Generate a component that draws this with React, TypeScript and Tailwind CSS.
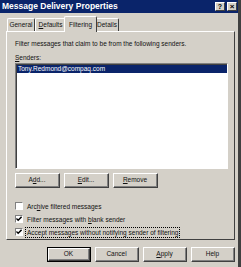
import type { ReactNode } from 'react';

const font = { fontFamily: '"Liberation Sans", Arial, sans-serif' };

function WinButton({ children, wide = 'w-[44px]', isDefault = false }: { children: ReactNode; wide?: string; isDefault?: boolean }) {
  return (
    <div className={`${wide} h-[15px] ${isDefault ? 'border border-black' : ''}`}>
      <div className="h-full w-full border-t border-l border-white border-r border-b border-r-[#404040] border-b-[#404040]">
        <div className="h-full w-full border-r border-b border-r-[#808080] border-b-[#808080] flex items-center justify-center text-[6.5px] text-[#111]">
          {children}
        </div>
      </div>
    </div>
  );
}

function Check({ checked, children, focused = false }: { checked: boolean; children: ReactNode; focused?: boolean }) {
  return (
    <div className="flex items-center gap-[3px] h-[10px]">
      <div className="w-[8px] h-[8px] bg-white border-t border-l border-t-[#808080] border-l-[#808080] border-r border-b border-r-white border-b-white flex items-center justify-center">
        {checked && (
          <svg width="6" height="6" viewBox="0 0 7 7">
            <path d="M0.5 3 L2.5 5 L6.5 1" stroke="black" strokeWidth="1.6" fill="none" />
          </svg>
        )}
      </div>
      <span className={`text-[6.5px] text-[#111] leading-[9px] px-[1px] ${focused ? 'outline outline-1 outline-dotted outline-black' : ''}`}>
        {children}
      </span>
    </div>
  );
}

function Tab({ label, active = false, w }: { label: ReactNode; active?: boolean; w: string }) {
  return (
    <div
      className={`${w} ${active ? 'h-[16px] -mb-[1px] bg-[#d4d0c8] z-10 -mx-[2px]' : 'h-[13px]'} border-t border-l border-white border-r border-r-[#404040] rounded-t-[2px] flex items-center justify-center text-[6.5px] text-[#111]`}
    >
      {label}
    </div>
  );
}

export default function App() {
  return (
    <div className="w-[241px] h-[267px] bg-[#d4d0c8] overflow-hidden flex flex-col border-r-[3px] border-r-[#404040]" style={font}>
      <div className="h-[13px] bg-[#0a246a] flex items-center justify-between pl-[2px] pr-[1px]">
        <span className="text-white font-bold text-[8.5px] leading-none">Message Delivery Properties</span>
        <div className="flex gap-[2px]">
          <div className="w-[10px] h-[9px] bg-[#d4d0c8] border-t border-l border-white border-r border-b border-r-[#404040] border-b-[#404040] flex items-center justify-center text-[7px] font-bold leading-none text-black">?</div>
          <div className="w-[10px] h-[9px] bg-[#d4d0c8] border-t border-l border-white border-r border-b border-r-[#404040] border-b-[#404040] flex items-center justify-center text-[8px] font-bold leading-none text-black">×</div>
        </div>
      </div>

      <div className="flex items-end pl-[7px] mt-[4px] h-[14px]">
        <Tab w="w-[28px]" label="General" />
        <Tab w="w-[31px]" label={<span><span className="underline">D</span>efaults</span>} />
        <Tab w="w-[33px]" active label="Filtering" />
        <Tab w="w-[24px]" label="Details" />
      </div>

      <div className="ml-[6px] w-[229px] h-[209px] border-t border-l border-white border-r border-b border-r-[#404040] border-b-[#404040] flex flex-col pl-[8px] pr-[7px]">
        <div className="text-[6.5px] text-[#111] mt-[7px] leading-[9px]">Filter messages that claim to be from the following senders.</div>
        <div className="text-[6.5px] text-[#111] mt-[5px] leading-[9px]"><span className="underline">S</span>enders:</div>
        <div className="mt-[1px] w-[213px] h-[106px] border-t border-l border-t-[#808080] border-l-[#808080] border-r border-b border-r-white border-b-white">
          <div className="w-full h-full bg-white border-t border-l border-t-[#404040] border-l-[#404040]">
            <div className="h-[8px] bg-[#0a246a] text-white text-[6.5px] leading-[8px] pl-[1px]">Tony.Redmond@compaq.com</div>
          </div>
        </div>
        <div className="flex gap-[4px] mt-[4px]">
          <WinButton wide="w-[45px]">A<span className="underline">d</span>d...</WinButton>
          <WinButton wide="w-[45px]"><span className="underline">E</span>dit...</WinButton>
          <WinButton wide="w-[45px]"><span className="underline">R</span>emove</WinButton>
        </div>
        <div className="flex flex-col gap-[3px] mt-[13px]">
          <Check checked={false}>Arc<span className="underline">h</span>ive filtered messages</Check>
          <Check checked>Filter messages with <span className="underline">b</span>lank sender</Check>
          <Check checked focused>Accept messages without notifying sender of filtering</Check>
        </div>
      </div>

      <div className="flex justify-end gap-[4px] mt-[7px] pr-[3px]">
        <WinButton isDefault>OK</WinButton>
        <WinButton>Cancel</WinButton>
        <WinButton><span className="underline">A</span>pply</WinButton>
        <WinButton>Help</WinButton>
      </div>
    </div>
  );
}
